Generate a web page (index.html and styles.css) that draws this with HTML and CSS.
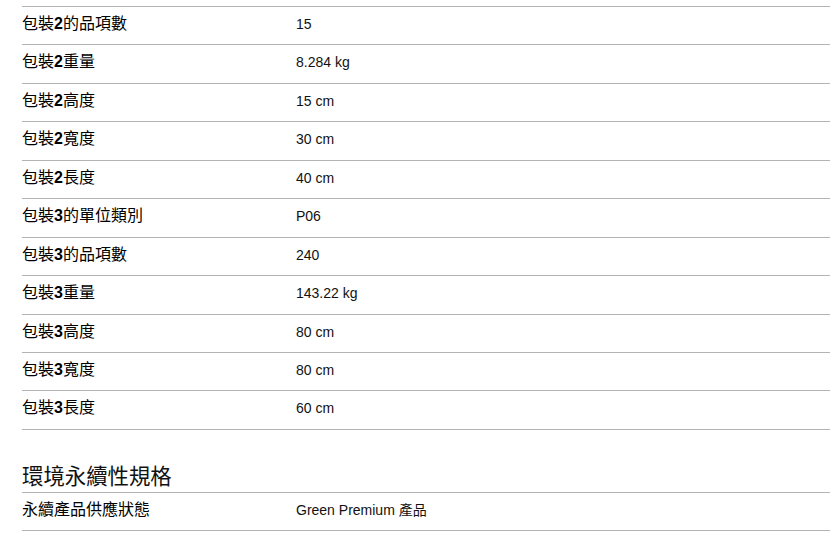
FILE: index.html
```html
<!DOCTYPE html>
<html lang="zh-Hant">
<head>
<meta charset="utf-8">
<title>規格</title>
<link rel="stylesheet" href="styles.css">
</head>
<body>
<div class="page">
  <div class="spec-table">
    <div class="row"><div class="label">包裝<span class="n">2</span>的品項數</div><div class="value">15</div></div>
    <div class="row"><div class="label">包裝<span class="n">2</span>重量</div><div class="value">8.284 kg</div></div>
    <div class="row"><div class="label">包裝<span class="n">2</span>高度</div><div class="value">15 cm</div></div>
    <div class="row"><div class="label">包裝<span class="n">2</span>寬度</div><div class="value">30 cm</div></div>
    <div class="row"><div class="label">包裝<span class="n">2</span>長度</div><div class="value">40 cm</div></div>
    <div class="row"><div class="label">包裝<span class="n">3</span>的單位類別</div><div class="value">P06</div></div>
    <div class="row"><div class="label">包裝<span class="n">3</span>的品項數</div><div class="value">240</div></div>
    <div class="row"><div class="label">包裝<span class="n">3</span>重量</div><div class="value">143.22 kg</div></div>
    <div class="row"><div class="label">包裝<span class="n">3</span>高度</div><div class="value">80 cm</div></div>
    <div class="row"><div class="label">包裝<span class="n">3</span>寬度</div><div class="value">80 cm</div></div>
    <div class="row"><div class="label">包裝<span class="n">3</span>長度</div><div class="value">60 cm</div></div>
  </div>
  <h2 class="section-title">環境永續性規格</h2>
  <div class="spec-table no-top">
    <div class="row"><div class="label">永續產品供應狀態</div><div class="value">Green Premium 產品</div></div>
  </div>
</div>
</body>
</html>
```

FILE: styles.css
```css
* { box-sizing: border-box; }
html, body { margin: 0; padding: 0; background: #fff; }
body {
  font-family: "Liberation Sans", "Noto Sans CJK TC", sans-serif;
  color: #000;
  overflow: hidden;
}
.page {
  padding: 6px 0 0 22px;
  width: 830px;
}
.spec-table {
  border-top: 1px solid #b4b4b4;
}
.spec-table.no-top { border-top: none; }
.row {
  display: grid;
  grid-template-columns: 270px 1fr;
  height: 38.45px;
  border-bottom: 1px solid #b4b4b4;
}
.label, .value {
  padding-top: 8px;
  line-height: 17.4px;
  white-space: nowrap;
}
.label {
  font-size: 16px;
  color: #000;
}
.label .n { font-weight: bold; }
.value {
  font-size: 14px;
  padding-left: 4px;
  padding-top: 9px;
  color: #111;
}
.section-title {
  margin: 33px 0 0;
  padding: 0 0 1px;
  font-size: 21.4px;
  line-height: 28px;
  font-weight: normal;
  color: #111;
  border-bottom: 1px solid #b4b4b4;
}
```
